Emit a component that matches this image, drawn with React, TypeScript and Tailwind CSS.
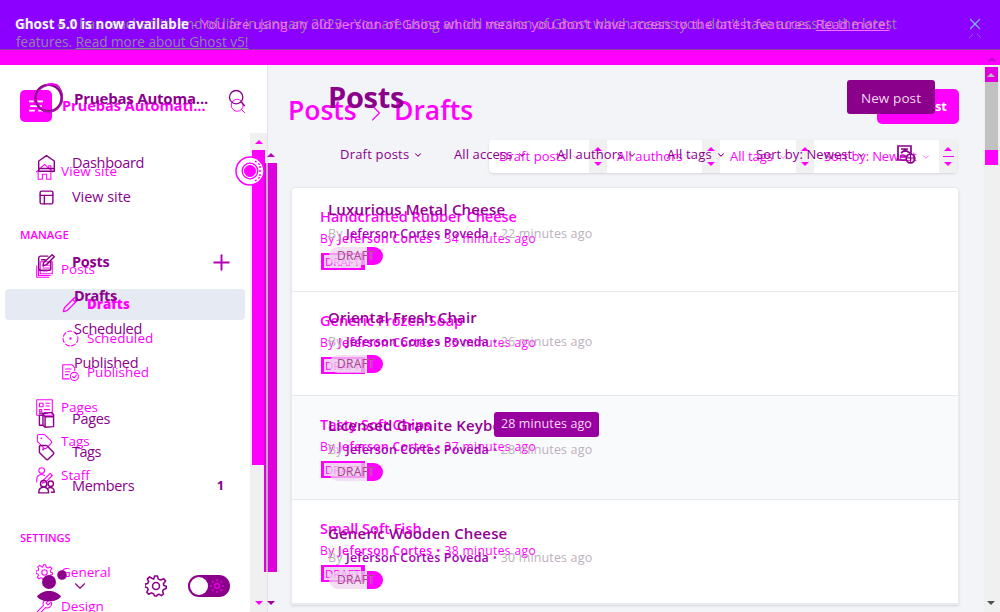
import React from "react";
import { Search, House, PanelsTopLeft, Pencil, Tag, Wrench, Plus, ChevronDown, ChevronRight, X } from "lucide-react";

type IconProps = { className?: string; strokeWidth?: number };
type IconType = React.ComponentType<IconProps>;

function makeIcon(children: React.ReactNode): IconType {
  return function Icon({ className, strokeWidth }: IconProps) {
    return (
      <svg viewBox="0 0 24 24" className={className} fill="none" stroke="currentColor" strokeWidth={strokeWidth} strokeLinecap="round" strokeLinejoin="round">
        {children}
      </svg>
    );
  };
}

const StackIcon = makeIcon(<path d="M6 1h17v17H6zM3.5 4v16.5H20M1 7v16h17M10 6h9M10 10h9M10 14h6" />);
const HomeIcon = makeIcon(<path d="M1 8.5L12 1l11 7.5V23H1zM1 19h22" />);
const CottageIcon = makeIcon(<path d="M0 13L12 2l12 11M18 7V4h3v6M3 12v11h6v-7h6v7h6V12" />);
const DottedIcon = makeIcon(<><circle cx="12" cy="12" r="10.5" strokeDasharray="6 3" /><circle cx="12" cy="12" r="1" /></>);
const CheckedDocIcon = makeIcon(<><path d="M10 21H1V1h13l4 4v4M5 7h8M5 11h6M5 15h4" /><circle cx="17.5" cy="17.5" r="5.7" /><path d="M15 17.5l2 2 3.5-4" /></>);
const PageIcon = makeIcon(<path d="M1 1h22v22H1zM5 6h5v5H5zM14 6h5M14 10h5M5 15h3v3H5zM12 15h7M12 19h7" />);
const StaffIcon = makeIcon(<><circle cx="8" cy="5" r="4" /><path d="M1 18c0-7 6-9 11-6M1 18v3M9 23l2-5L20 9l3 3-9 9z" /></>);
const GearIcon = makeIcon(<><circle cx="12" cy="12" r="3.8" /><path d="M9.5 4.5L10.5 1h3l1 3.5 2.5 1L20.500 4l2 2.500L20 9.500l.6 2 2.600.8v2.400l-3 1-1 2 1 3-2.200 1.800-2.800-1.500-2 .8L12.800 23h-2.400l-1-2.500-2.400-1L4 21l-2-2.200L3.500 16l-.8-2L0 13v-3l3-.8L4 7 2.500 4.500 5 2l2.500 1.500z" /></>);
const EditIcon = makeIcon(<path d="M14 3H4Q1 3 1 6v14q0 3 3 3h11q3 0 3-3v-9M7 17l1-5L20 1l3 3-11 11zM5 8h5" />);
const BookIcon = makeIcon(<path d="M7 4l12-2 3 3v17l-12 1-3-3zM7 5l3 3h12M10 8v15M7 6H2v14h5M2 3h12" />);
const MembersIcon = makeIcon(<><circle cx="8" cy="8" r="4.5" /><circle cx="18" cy="8" r="3.8" /><path d="M1 21c0-5 3-8 7-8s7 3 7 8zM15 14c5-2 8 1 8 6h-4" /></>);

function NavItem({ icon: Icon, label, className = "", end, bold }: { icon?: IconType; label: string; className?: string; end?: React.ReactNode; bold?: boolean }) {
  return (
    <div className={`flex h-[34px] shrink-0 items-center ${className}`}>
      {Icon && <Icon className="mr-2 size-[17px] shrink-0" strokeWidth={bold ? 2 : 1.5} />}
      <span className="whitespace-nowrap">{label}</span>
      {end}
    </div>
  );
}

function Ring() {
  return (
    <svg viewBox="0 0 30 32" className="h-8 w-[30px] shrink-0" fill="none" stroke="#8b008b">
      <ellipse cx="14.5" cy="16" rx="13" ry="13.2" strokeWidth="2.3" />
      <path d="M4 9Q12 1 23 3Q30 9 28 20Q25 29 15 30Q6 29 3 20" strokeWidth="1.4" stroke="#a51ba5" />
      <path d="M12 3Q20 0 25 5" stroke="#f000f0" strokeWidth="1.5" />
    </svg>
  );
}

function OldSidebar() {
  return (
    <div className="flex w-[268px] shrink-0 flex-col border-r border-[#dfe3ea] bg-white text-[13.5px] text-[#ff00ff]">
      <div className="mt-[25px] flex h-8 shrink-0 items-center pl-5">
        <div className="flex size-8 items-center justify-center rounded-[5px] bg-[#ff00ff]">
          <svg viewBox="0 0 12 12" className="size-3.5" stroke="#fff" strokeWidth="1.5"><path d="M0 2h4M7 2h5M1 6h10M0 10h5M8 10h4" /></svg>
        </div>
        <span className="ml-2.5 w-[167px] text-[14.5px] font-bold">Pruebas Automati...</span>
        <Search className="size-[18px]" strokeWidth={1.3} />
      </div>
      <NavItem icon={CottageIcon} label="View site" className="mt-8 pl-[36px] tracking-[0.1px]" />
      <div className="mt-[30px] flex h-[34px] shrink-0 items-center pl-5 text-[11.3px] font-semibold">MANAGE</div>
      <NavItem icon={StackIcon} label="Posts" className="pl-[36px]" />
      <div className="mx-[5px] mt-[3px] mr-[22px] flex h-[31px] shrink-0 items-center rounded bg-[#e6eaf2] pl-[57px] text-[13.3px] font-extrabold">
        <Pencil className="mr-2 size-[17px]" strokeWidth={1.8} />Drafts
      </div>
      <NavItem icon={DottedIcon} label="Scheduled" className="mt-[1px] pl-[62px] tracking-[0.1px]" />
      <NavItem icon={CheckedDocIcon} label="Published" className="pl-[62px]" />
      <NavItem icon={PageIcon} label="Pages" className="mt-px pl-[36px]" />
      <NavItem icon={Tag} label="Tags" className="pl-[36px]" />
      <NavItem icon={StaffIcon} label="Staff" className="pl-[36px]" />
      <div className="mt-[29px] flex h-[34px] shrink-0 items-center pl-5 text-[11px] font-semibold">SETTINGS</div>
      <NavItem icon={GearIcon} label="General" className="pl-[36px]" />
      <NavItem icon={Wrench} label="Design" className="pl-[36px]" />
    </div>
  );
}

function NewSidebar() {
  return (
    <div className="flex w-[250px] shrink-0 flex-col text-[14.5px] text-[#8b008b]">
      <div className="mt-[17px] flex h-8 shrink-0 items-center pl-[34px]">
        <Ring />
        <span className="ml-2.5 w-[153px] text-[15px] font-bold tracking-[-0.2px]">Pruebas Automa...</span>
        <Search className="size-5" strokeWidth={1.6} />
      </div>
      <NavItem icon={HomeIcon} label="Dashboard" bold className="mt-8 pl-[38px] tracking-[-0.3px] [&_span]:ml-[9px]" />
      <NavItem icon={PanelsTopLeft} label="View site" bold className="pl-[38px] tracking-[-0.05px] [&_span]:ml-[9px]" />
      <NavItem icon={EditIcon} label="Posts" bold className="mt-[31px] pl-[38px] font-bold tracking-[-0.3px] [&_span]:ml-[9px]" end={<Plus className="mr-4 ml-auto size-[25px] text-[#b000b0]" strokeWidth={1.8} />} />
      <NavItem label="Drafts" className="pl-[74px] font-bold tracking-[-0.4px]" />
      <NavItem label="Scheduled" className="-mt-px pl-[74px] tracking-[-0.25px]" />
      <NavItem label="Published" className="pl-[74px] tracking-[-0.25px]" />
      <NavItem icon={BookIcon} label="Pages" bold className="mt-[22px] pl-[38px] tracking-[-0.3px] [&_span]:ml-[9px]" />
      <NavItem icon={Tag} label="Tags" bold className="-mt-px pl-[38px] tracking-[-0.5px] [&_span]:ml-[9px]" />
      <NavItem icon={MembersIcon} label="Members" bold className="pl-[38px] tracking-[-0.3px] [&_span]:ml-[9px]" end={<b className="mr-[26px] ml-auto text-[13px]">1</b>} />
      <div className="mt-[66px] flex h-[34px] shrink-0 items-center pl-[37px]">
        <svg viewBox="0 0 30 34" className="h-[34px] w-[30px]" fill="#8b008b"><circle cx="12" cy="13" r="7" /><path d="M0 27.5C5 20 19 20 24 27.5C19 34 5 34 0 27.5" /><circle cx="25" cy="6" r="4.8" /></svg>
        <ChevronDown className="ml-[4px] size-[18px]" strokeWidth={1.5} />
        <GearIcon className="ml-[56px] size-[22px]" strokeWidth={1.7} />
        <div className="ml-[21px] flex h-[22px] w-[42px] shrink-0 items-center justify-between rounded-full bg-[#8b008b] px-0.5">
          <div className="size-[18px] rounded-full bg-white" />
          <svg viewBox="0 0 14 14" className="mr-1 size-3.5" stroke="#df00df" strokeWidth="1.5"><circle cx="7" cy="7" r="2.4" fill="none" /><path d="M7 0v2M7 12v2M0 7h2M12 7h2M2 2l1.5 1.5M10.5 10.5L12 12M12 2l-1.5 1.5M2 12l1.5-1.5" /></svg>
        </div>
      </div>
    </div>
  );
}

const filtersOld = [
  { label: "Draft posts", cls: "w-[100px] tracking-[0.05px]" },
  { label: "All authors", cls: "w-[95px] tracking-[0.05px]" },
  { label: "All tags", cls: "w-[76px] tracking-[-0.05px]" },
  { label: "Sort by: Newest", cls: "w-[125px] tracking-[-0.15px]" },
];
const filtersNew = [
  { label: "Draft posts", cls: "w-[114px] tracking-[0.2px]" },
  { label: "All access", cls: "w-[103px] tracking-[0.1px]" },
  { label: "All authors", cls: "w-[110px] tracking-[0.1px]" },
  { label: "All tags", cls: "w-[89px] tracking-[0.2px]" },
  { label: "Sort by: Newest", cls: "w-[141px] tracking-[0.1px]" },
];
const oldPosts = [
  ["Handcrafted Rubber Cheese", "34"],
  ["Generic Frozen Soap", "35"],
  ["Tasty Soft Chips", "37"],
  ["Small Soft Fish", "38"],
];
const newPosts = [
  ["Luxurious Metal Cheese", "22"],
  ["Oriental Fresh Chair", "26"],
  ["Licensed Granite Keyboard", "28"],
  ["Generic Wooden Cheese", "30"],
];

function OldMain() {
  return (
    <div className="flex w-[716px] shrink-0 flex-col bg-[#f2f4f8] pl-[23px] text-[#ff00ff]">
      <div className="mt-6 flex h-[35px] w-[668px] shrink-0 items-center">
        <div className="-ml-[3px] flex items-center pt-[9px] text-[26.5px] font-semibold"><span className="w-[74px]">Posts</span><ChevronRight className="mt-1 size-7" strokeWidth={1} /><span className="ml-[4px]">Drafts</span></div>
        <div className="ml-auto flex h-[35px] w-[82px] items-center justify-end rounded-[5px] bg-[#ff00ff] pr-3 text-[13px] font-bold text-white">New post</div>
      </div>
      <div className="mt-4 ml-[198px] flex h-[33px] w-[468px] shrink-0 rounded bg-white text-[13px] shadow-sm">
        {filtersOld.map((f) => (
          <React.Fragment key={f.label}>
            <div className={`flex shrink-0 items-center justify-between pr-2 pl-2.5 ${f.cls}`}><span className="whitespace-nowrap">{f.label}</span><ChevronDown className="size-2.5" strokeWidth={1.3} /></div>
            <div className="flex w-[18px] shrink-0 flex-col items-center justify-between bg-[#f0f0f0] py-[7px]">
              <svg viewBox="0 0 8 4" className="h-1 w-2"><path d="M0 4L4 0L8 4" fill="#ff00ff" /></svg>
              {f.label.startsWith("Sort") && <div className="h-px w-[11px] bg-[#ff00ff]" />}
              <svg viewBox="0 0 8 4" className="h-1 w-2"><path d="M0 0L4 4L8 0" fill="#ff00ff" /></svg>
            </div>
          </React.Fragment>
        ))}
      </div>
      <div className="mt-[14px] w-[668px] shrink-0 rounded-t border border-[#e8ebf0] bg-white shadow-sm">
        {oldPosts.map(([title, min], i) => (
          <div key={title} className={`flex h-[104px] flex-col border-b border-[#e5e9ee] pl-7 ${i === 2 ? "bg-[#f9fafc]" : ""}`}>
            <div className="mt-[17px] h-[23px] text-[14.5px] leading-[23px] font-semibold">{title}</div>
            <div className="h-[22px] text-[12px] leading-[22px] tracking-[0.4px]">By <b className="font-semibold">Jeferson Cortes</b> • {min} minutes ago</div>
            <div className="mt-[3px] ml-px flex h-[17px] w-11 items-center bg-[#ff00ff]"><span className="ml-[3px] bg-[#efd2f0] px-px text-[11.5px] leading-[13px]">DRAFT</span></div>
          </div>
        ))}
      </div>
    </div>
  );
}

function NewMain() {
  return (
    <div className="flex w-[734px] shrink-0 flex-col pl-[78px] text-[#8b008b]">
      <div className="mt-[15px] flex h-[34px] w-[607px] shrink-0 items-center">
        <span className="text-[29px] font-bold tracking-[-0.3px]">Posts</span>
        <div className="ml-auto flex h-[34px] w-[88px] items-center justify-center rounded-[3px] bg-[#8b008b] pt-0.5 text-[13.5px] tracking-[0.1px] text-[#efd8ef]">New post</div>
      </div>
      <div className="mt-[24px] ml-3 flex h-[34px] shrink-0 items-center text-[13px]">
        {filtersNew.map((f) => (
          <div key={f.label} className={`flex shrink-0 items-center gap-1 whitespace-nowrap ${f.cls}`}>{f.label}<ChevronDown className="size-2.5" strokeWidth={2.5} /></div>
        ))}
        <svg viewBox="0 0 20 20" className="size-5" fill="none" stroke="#8b008b" strokeWidth="1.7"><path d="M9 15H1V1h13v8M4 4h7M4 8l4-3 5 3M3 11h6" /><circle cx="13.5" cy="13.5" r="4.3" /><path d="M10 13h7M13.5 9v8" strokeWidth="1" /></svg>
      </div>
      <div className="mt-[25px] shrink-0">
        {newPosts.map(([title, min]) => (
          <div key={title} className="h-[108px]">
            <div className="h-[25px] text-[15px] leading-6 font-semibold tracking-[0.17px] text-[#930093]">{title}</div>
            <div className="h-6 text-[12.5px] leading-6 tracking-[0.15px] text-[#bdb0bd]">By <b className="font-semibold text-[#a600b5]">Jeferson Cortes Poveda</b> <span className="text-[#b333b8]">•</span> {min} minutes ago</div>
            <div className="mt-px ml-px flex h-[18px] w-[54px] items-center justify-center rounded-full bg-linear-to-r from-[#efd2f0b8] from-70% to-[#ff00ff] to-70% text-[12px] tracking-[0.25px] text-[#ad438f]"><span className="[text-shadow:0_0_1px_#e0d0df]">DRAFT</span></div>
          </div>
        ))}
      </div>
    </div>
  );
}

function SideScrollbars() {
  return (
    <div className="absolute top-[133px] left-[250px] flex h-[479px] w-7">
      <div className="relative flex w-[17px] flex-col items-center bg-[#f0f0f0]">
        <svg viewBox="0 0 8 4" className="mt-[7px] h-1 w-2 shrink-0"><path d="M0 4L4 0L8 4" fill="#ff00ff" /></svg>
        <div className="mt-1.5 h-[315px] w-[13px] shrink-0 bg-[#ff00ff]" />
        <svg viewBox="0 0 8 4" className="mt-auto mb-[7px] h-1 w-2"><path d="M0 0L4 4L8 0" fill="#ff00ff" /></svg>
      </div>
      <div className="absolute top-[20px] left-[14px] flex h-[419px] w-[13px] flex-col">
        <svg viewBox="0 0 8 4" className="ml-[3px] h-1 w-2 shrink-0"><path d="M0 4L4 0L8 4" fill="#bb00bb" /></svg>
        <div className="mt-1.5 flex h-[409px]"><div className="w-0.5 bg-[#e000e0]" /><div className="w-0.5 bg-[#c1adc1]" /><div className="w-[9px] bg-[#dd00dd]" /></div>
      </div>
      <svg viewBox="0 0 8 4" className="absolute bottom-[7px] left-[17px] h-1 w-2"><path d="M0 0L4 4L8 0" fill="#a000a0" /></svg>
      <svg viewBox="0 0 30 30" className="absolute top-[23px] -left-[15px] size-[30px]" fill="#fff" stroke="#ff00ff"><circle cx="15" cy="15" r="14" strokeWidth="1.5" /><circle cx="15" cy="15" r="7.8" strokeWidth="1.3" /><circle cx="15" cy="15" r="5.5" fill="#ff00ff" /><path d="M20 5l5 4M20 25l5-4M25 10v10" strokeDasharray="2 2" strokeWidth="1.5" /></svg>
    </div>
  );
}

export default function App() {
  return (
    <div className="relative flex h-[612px] w-[1000px] flex-col overflow-hidden bg-[#f2f4f8] font-['Open_Sans','Noto_Sans',sans-serif]">
      <header className="relative h-[50px] shrink-0 border-b border-[#8744a0] bg-[#8b00ff] pt-[15px] pl-[15px] text-[13.3px] leading-[18px] text-[#ff6cff]">
        <p className="absolute top-[15px] left-4 text-[13.6px] tracking-[-0.01px] whitespace-nowrap text-[#9387a0]">Ghost 4.x has reached its end of life in January 2023 - You are using an old version of Ghost which means you don't have access to the latest<br />features. <u>Read more about Ghost v5!</u></p>
        <p className="relative tracking-[0.22px] whitespace-nowrap"><b className="tracking-[0.12px] text-[#f4f4ff]">Ghost 5.0 is now available</b> - You are using an old version of Ghost which means you don't have access to the latest features. <u>Read more!</u></p>
        <X className="absolute top-[15px] left-[966px] size-[18px] text-[#79b7ff]" strokeWidth={1.6} />
        <svg viewBox="0 0 12 4" className="absolute top-[34px] left-[969px] h-1 w-3" fill="none" stroke="#9387a0"><path d="M0 4L4 0M8 0l4 4" strokeDasharray="2 1" /></svg>
      </header>
      <div className="h-[15px] shrink-0 bg-[#ff00ff]" />
      <div className="flex min-h-0 flex-1 overflow-hidden">
        <OldSidebar />
        <OldMain />
        <aside className="flex w-4 shrink-0 flex-col items-center bg-[#f0f0f0] pt-0.5 pr-0.5">
          <div className="flex h-[15px] w-[13px] items-center justify-center bg-[#e100e1]"><svg viewBox="0 0 8 4" className="h-1 w-2"><path d="M0 4L4 0L8 4" fill="#bbb" /></svg></div>
          <div className="h-[68px] w-[13px] bg-[#c1c1c1]" />
          <div className="h-[15px] w-[13px] bg-[#ff00ff]" />
          <svg viewBox="0 0 8 4" className="mt-auto mb-[7px] h-1 w-2"><path d="M0 0L4 4L8 0" fill="#505050" /></svg>
        </aside>
      </div>
      <div className="absolute inset-x-0 top-[65px] bottom-0 flex overflow-hidden">
        <NewSidebar />
        <NewMain />
      </div>
      <SideScrollbars />
      <svg viewBox="0 0 8 4" className="absolute top-[57px] left-[988px] h-1 w-2"><path d="M0 4L4 0L8 4" fill="#c000c0" /></svg>
      <div className="absolute top-[412px] left-[494px] flex h-[25px] w-[105px] items-center justify-center rounded-[3px] bg-[#9900a0] text-[12.5px] tracking-[0.1px] whitespace-nowrap text-[#f4dcf4]">28 minutes ago</div>
    </div>
  );
}
